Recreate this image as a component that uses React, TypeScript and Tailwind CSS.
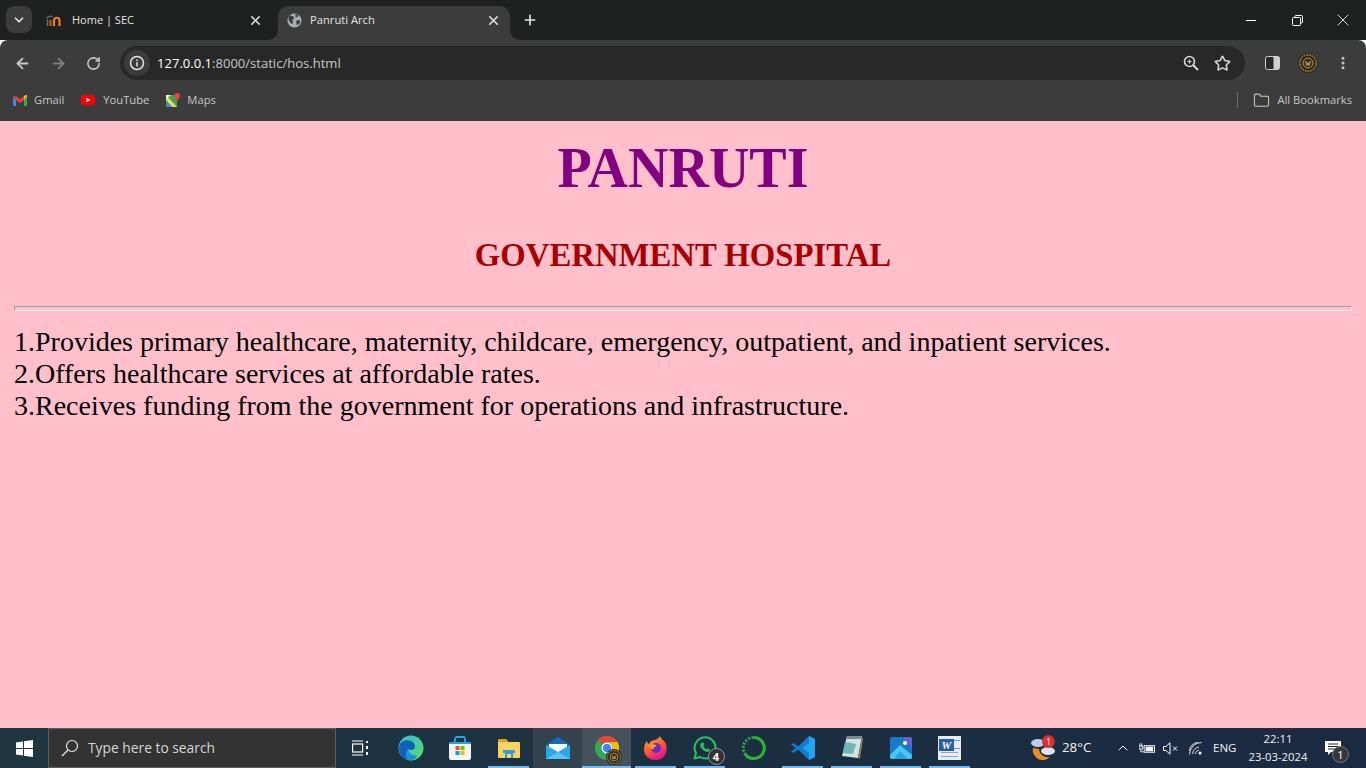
import { ArrowLeft, ArrowRight, ChevronDown, ChevronUp, Folder, MoreVertical, Plus, RotateCw, Star, X } from "lucide-react";

const ui = "font-['Open_Sans','Noto_Sans',sans-serif]";

function Flare({ side }: { side: "left" | "right" }) {
  // little curve where the active tab meets the toolbar
  return (
    <svg width="10" height="10" viewBox="0 0 10 10" className={side === "left" ? "absolute bottom-0 -left-[10px]" : "absolute bottom-0 -right-[10px]"}>
      <path d={side === "left" ? "M10 0V10H0A10 10 0 0 0 10 0Z" : "M0 0V10H10A10 10 0 0 1 0 0Z"} fill="#3c3c3c" />
    </svg>
  );
}

function GlobeIcon() {
  return (
    <svg width="15" height="15" viewBox="0 0 16 16">
      <circle cx="8" cy="8" r="7.5" fill="#a8adb3" />
      <path d="M3 2.500 6.500 3.500 7.500 6 5.500 7.500 6.500 10.500 5 12 2 8 1.500 5ZM9 1 12.500 2.500 11 4.500 9 4ZM10 8 13.500 7.500 14 10 11.500 13 10 12Z" fill="#3c3c3c" />
    </svg>
  );
}

function MoodleIcon() {
  return (
    <svg width="15" height="11" viewBox="0 0 15 11">
      <path d="M0 3 5 1 7 2" stroke="#6f6f6f" strokeWidth="1.200" fill="none" />
      <path d="M1.500 11V4.500" stroke="#6f6f6f" strokeWidth="1.500" fill="none" />
      <path d="M4.500 11V5" stroke="#b9641c" strokeWidth="2" fill="none" />
      <path d="M8 11V5.500A2.500 2.500 0 0 1 13.500 5.500V11" stroke="#ee7f1c" strokeWidth="2.200" fill="none" />
    </svg>
  );
}

function GmailIcon() {
  return (
    <svg width="14" height="11" viewBox="0 0 14 11">
      <path d="M0 2V10a1 1 0 0 0 1 1H3V5Z" fill="#4285f4" />
      <path d="M14 2V10a1 1 0 0 1-1 1H11V5Z" fill="#34a853" />
      <path d="M0 2 3 1 7 4.500 11 1 14 2 11 5 7 8 3 5Z" fill="#ea4335" />
      <path d="M11 1 12.500 0A1 1 0 0 1 14 1V2L11 5Z" fill="#fbbc04" />
    </svg>
  );
}

function YouTubeIcon() {
  return (
    <svg width="14" height="10" viewBox="0 0 14 10">
      <rect width="14" height="10" rx="2.500" fill="#ff0000" />
      <path d="M5.500 3 9.500 5 5.500 7Z" fill="#fff" />
    </svg>
  );
}

function MapsIcon() {
  return (
    <svg width="14" height="15" viewBox="0 0 14 15">
      <path d="M0 2H11V14H0Z" fill="#34a853" />
      <path d="M0 14 5.500 8 11 14Z" fill="#4285f4" />
      <path d="M0 2 11 14H6.500L0 7Z" fill="#f6d55c" />
      <path d="M0 2H5L0 6Z" fill="#f6f1e2" />
      <path d="M11 0a3 3 0 0 1 3 3c0 2-3 4.500-3 5.500C11 7.500 8 5 8 3a3 3 0 0 1 3-3Z" fill="#ea4335" />
    </svg>
  );
}

function ProfileBadge({ size }: { size: number }) {
  return (
    <svg width={size} height={size} viewBox="0 0 20 20">
      <circle cx="10" cy="10" r="10" fill="#2c2416" />
      <circle cx="10" cy="10" r="8.200" fill="none" stroke="#8f7440" strokeWidth="1.800" strokeDasharray="2 .8" />
      <circle cx="10" cy="10" r="5" fill="#3a301c" stroke="#b59a62" strokeWidth="1" />
      <path d="M7.500 8 9 12.500 10 9.500 11 12.500 12.500 8" fill="none" stroke="#c9b27a" strokeWidth=".9" />
    </svg>
  );
}

function TabStrip() {
  return (
    <div className="flex h-10 items-end bg-[#1f2121] text-[#e3e3e3]">
      <div className="mb-[7px] ml-[6px] flex h-[27px] w-[26px] items-center justify-center rounded-lg bg-[#3c3c3c]">
        <ChevronDown size={14} strokeWidth={3} />
      </div>
      <div className="mb-[6px] ml-[12px] flex h-7 w-[234px] items-center pl-[2px] pr-[15px]">
        <MoodleIcon />
        <span className="ml-[11px] flex-1 text-[11px]">Home | SEC</span>
        <X size={15} strokeWidth={2.500} />
      </div>
      <div className="relative flex h-[34px] w-[232px] items-center rounded-t-[10px] bg-[#3c3c3c] pb-[6px] pl-[9px] pr-[9px]">
        <Flare side="left" />
        <GlobeIcon />
        <span className="ml-[8px] flex-1 text-[11.2px]">Panruti Arch</span>
        <X size={15} strokeWidth={2.500} />
        <Flare side="right" />
      </div>
      <div className="mb-[6px] ml-[12px] flex h-7 items-center">
        <Plus size={16} strokeWidth={2.500} />
      </div>
      <div className="mb-[6px] ml-auto flex h-7 items-center text-white">
        <div className="flex w-[46px] justify-center"><div className="h-px w-[10px] bg-white" /></div>
        <div className="flex w-[46px] justify-center">
          <svg width="11" height="11" viewBox="0 0 11 11" fill="none" stroke="#fff">
            <rect x="0.500" y="2.500" width="8" height="8" rx="1" />
            <path d="M3 2.500V1.500A1 1 0 0 1 4 .5H9.500A1 1 0 0 1 10.500 1.500V7A1 1 0 0 1 9.500 8H8.500" />
          </svg>
        </div>
        <div className="flex w-[46px] justify-center"><X size={20} strokeWidth={1} /></div>
      </div>
    </div>
  );
}

function Toolbar() {
  return (
    <div className="flex h-10 items-end rounded-t-lg bg-[#3c3c3c] text-[#c7c7c7]">
      <div className="mb-[8px] flex w-[120px] items-center pl-[14px]">
        <ArrowLeft size={17} strokeWidth={2.500} />
        <ArrowRight size={17} strokeWidth={2.500} className="ml-[19px] text-[#7d7d7d]" />
        <RotateCw size={15} strokeWidth={2.500} className="ml-[20px] -translate-x-px" />
      </div>
      <div className="flex h-[34px] w-[1125px] items-center rounded-l-full rounded-r-full bg-[#282828] pl-[4px] pr-[14px]">
        <div className="flex h-[26px] w-[26px] items-center justify-center rounded-full bg-[#3c3c3c]">
          <svg width="16" height="16" viewBox="0 0 16 16" fill="none" stroke="#e3e3e3" strokeWidth="1.500">
            <circle cx="8" cy="8" r="6.500" />
            <path d="M8 7V11.500M8 4.500V6" />
          </svg>
        </div>
        <span className="ml-[7px] flex-1 pt-px text-[13.05px] text-[#c4c7c5]"><span className="text-white">127.0.0.1</span>:8000/static/hos.html</span>
        <svg width="16" height="16" viewBox="0 0 16 16" fill="none" stroke="#d8d8d8" strokeWidth="1.600">
          <circle cx="6.500" cy="6.500" r="5" />
          <path d="M10 10 15 15" strokeWidth="2" />
          <path d="M4.500 6.500H8.500M6.500 4.500V8.500" strokeWidth="1.200" />
        </svg>
        <Star size={17} strokeWidth={2.250} className="ml-[15px] text-[#d8d8d8]" />
      </div>
      <div className="mb-[7px] ml-[20px] flex items-center">
        <svg width="15" height="14" viewBox="0 0 15 14">
          <rect x="0.500" y="0.500" width="14" height="13" rx="2" fill="#2b2b2b" stroke="#d0d0d0" />
          <path d="M8.500 0.500H12.500A2 2 0 0 1 14.500 2.500V11.500A2 2 0 0 1 12.500 13.500H8.500Z" fill="#d0d0d0" />
        </svg>
        <div className="ml-[18px]"><ProfileBadge size={20} /></div>
        <MoreVertical size={16} strokeWidth={2.500} className="ml-[17px]" />
      </div>
    </div>
  );
}

function BookmarksBar() {
  return (
    <div className="flex h-[41px] items-center bg-[#3c3c3c] pb-px pl-[13px] text-[11.2px] text-[#c7c7c7]">
      <GmailIcon />
      <span className="ml-[7px]">Gmail</span>
      <div className="ml-[17px]"><YouTubeIcon /></div>
      <span className="ml-[8px]">YouTube</span>
      <div className="ml-[17px]"><MapsIcon /></div>
      <span className="ml-[7px]">Maps</span>
      <div className="ml-auto h-[16px] w-px bg-[#6a6a6a]" />
      <Folder size={17} strokeWidth={1.500} className="ml-[15px]" />
      <span className="ml-[7px] mr-[14px]">All Bookmarks</span>
    </div>
  );
}

function WindowsLogo() {
  return (
    <svg width="17" height="17" viewBox="0 0 17 17" fill="#fff">
      <path d="M0 2.400 7 1.400V8H0ZM8 1.300 17 0V8H8ZM0 9H7V15.600L0 14.600ZM8 9H17V17L8 15.700Z" />
    </svg>
  );
}

function Edge() {
  return (
    <svg width="26" height="26" viewBox="0 0 26 26">
      <defs>
        <linearGradient id="edgeA" x1="0" y1="0" x2="1" y2="1">
          <stop offset="0" stopColor="#2fc2d8" />
          <stop offset="1" stopColor="#5fd86a" />
        </linearGradient>
      </defs>
      <circle cx="13" cy="13" r="12.500" fill="url(#edgeA)" />
      <path d="M1 13C1 6 8 4 13 6c4 1.500 5 6 3 8-3 2-6 0-6 0 0 4 4 7 9 7-2 3-5 4-7 4C6 25 1 20 1 13Z" fill="#0c62b8" />
      <path d="M10 14c0 4 4 7 9 7-2 3-5 4-7 4-4 0-6-6-2-11Z" fill="#1e90e0" />
    </svg>
  );
}

function Store() {
  return (
    <svg width="24" height="25" viewBox="0 0 24 25">
      <path d="M7 6V3a2 2 0 0 1 2-2H15a2 2 0 0 1 2 2V6" fill="none" stroke="#22a7e0" strokeWidth="1.800" />
      <path d="M1 6H23V22a2 2 0 0 1-2 2H3a2 2 0 0 1-2-2Z" fill="#f4f4f4" />
      <path d="M1 6H23V8H1Z" fill="#1fa4e4" />
      <rect x="7.500" y="10" width="4" height="4" fill="#f25022" />
      <rect x="12.500" y="10" width="4" height="4" fill="#7fba00" />
      <rect x="7.500" y="15" width="4" height="4" fill="#00a4ef" />
      <rect x="12.500" y="15" width="4" height="4" fill="#ffb900" />
    </svg>
  );
}

function Explorer() {
  return (
    <svg width="22" height="19" viewBox="0 0 22 19">
      <path d="M0 1a1 1 0 0 1 1-1H8L10 2V4H0Z" fill="#d9a32a" />
      <path d="M0 3H21a1 1 0 0 1 1 1V18a1 1 0 0 1-1 1H1a1 1 0 0 1-1-1Z" fill="#fbd35c" />
      <path d="M5 11H17V14H15V19H7V14H5Z" fill="#2f9be0" />
      <rect x="9" y="15" width="4" height="4" fill="#fbd35c" />
    </svg>
  );
}

function Mail() {
  return (
    <svg width="24" height="22" viewBox="0 0 24 22">
      <path d="M0 8 12 0 24 8V22H0Z" fill="#0f6cbd" />
      <path d="M3 7H21V14L12 19 3 14Z" fill="#fff" />
      <path d="M0 8 12 15 24 8V22H0Z" fill="#2aa7e8" />
      <path d="M0 22 12 15 24 22Z" fill="#5cc3f2" />
    </svg>
  );
}

function Chrome() {
  return (
    <div className="relative h-[24px] w-[24px]">
      <svg width="24" height="24" viewBox="0 0 24 24">
        <circle cx="12" cy="12" r="12" fill="#34a853" />
        <path d="M12 0A12 12 0 0 1 22.400 6H12A6 6 0 0 0 6.800 9L3 3.600A12 12 0 0 1 12 0Z" fill="#ea4335" />
        <path d="M22.400 6A12 12 0 0 1 12 24L17.200 15A6 6 0 0 0 12 6Z" fill="#fbbc04" />
        <circle cx="12" cy="12" r="5.500" fill="#fff" />
        <circle cx="12" cy="12" r="4.300" fill="#4285f4" />
      </svg>
      <div className="absolute -bottom-[5px] -right-[3px]"><ProfileBadge size={16} /></div>
    </div>
  );
}

function Firefox() {
  return (
    <svg width="23" height="24" viewBox="0 0 23 24">
      <defs>
        <linearGradient id="foxA" x1="0" y1="0" x2="0.500" y2="1">
          <stop offset="0" stopColor="#ffb52e" />
          <stop offset="0.600" stopColor="#ff5634" />
          <stop offset="1" stopColor="#e31587" />
        </linearGradient>
      </defs>
      <path d="M16 0c1 3 4 4 6 8 2 6 0 16-10.500 16C4 24 0 19 0 13 0 9 2 6 3 5c0 2 1 3 2 3 1-3 4-4 6-4 2-1 4-2 5-4Z" fill="url(#foxA)" />
      <circle cx="12" cy="12" r="5" fill="#6a2cc9" />
      <path d="M4 10c3-2 6-2 8-1 1 1 0 2-2 2 1 3-3 3-6-1Z" fill="#ff9a2e" />
    </svg>
  );
}

function WhatsApp() {
  return (
    <div className="relative h-[24px] w-[24px]">
      <svg width="24" height="24" viewBox="0 0 24 24" fill="none">
        <path d="M1.500 22.500 3 17A10.500 10.500 0 1 1 7 21Z" stroke="#25c35f" strokeWidth="2" strokeLinejoin="round" />
        <path d="M8 7c-1.500 1.500-1 4 1.500 6.500S15 16.500 16.500 15c.8-.8.500-1.500 0-2l-1.500-.8-1.200 1c-1.500-.5-3-2-3.500-3.500l1-1.200L11 7c-.8-.8-2.200-.8-3 0Z" fill="#25c35f" />
      </svg>
      <div className="absolute -bottom-[5px] -right-[8px] flex h-[17px] w-[17px] items-center justify-center rounded-full border border-[#9a9a9a] bg-[#333] text-[11px] font-bold leading-none text-white">4</div>
    </div>
  );
}

function GreenRing() {
  return (
    <svg width="24" height="24" viewBox="0 0 24 24" fill="none">
      <path d="M12 1.500A10.500 10.500 0 1 1 3.500 18.500" stroke="#2fb52f" strokeWidth="3" />
      <path d="M3.500 18.500A10.500 10.500 0 0 1 12 1.500" stroke="#2fa84a" strokeWidth="3" strokeDasharray="2 1.500" />
    </svg>
  );
}

function VsCode() {
  return (
    <svg width="24" height="24" viewBox="0 0 24 24">
      <path d="M18 0 24 3V21L18 24 7 13.500 2.500 17 0 15.500 5 12 0 8.500 2.500 7 7 10.500Z" fill="#0f7ccc" />
      <path d="M18 0 24 3V21L18 24V17L11 12 18 7Z" fill="#23a3ef" />
    </svg>
  );
}

function Notepad() {
  return (
    <svg width="22" height="24" viewBox="0 0 22 24">
      <path d="M6 0H21L17 22 1 20Z" fill="#cfe3e2" />
      <path d="M6 0H21L20 3H5.500Z" fill="#7c8b90" />
      <path d="M4 6 15 8 12 18 2 17Z" fill="#6fb5b0" />
      <path d="M17 22 21 1 22 3 19 23Z" fill="#8f7a55" />
    </svg>
  );
}

function Photos() {
  return (
    <svg width="22" height="22" viewBox="0 0 22 22">
      <rect width="22" height="22" rx="2" fill="#1b78c8" />
      <path d="M14 0H20a2 2 0 0 1 2 2V10L14 5Z" fill="#6a5fd0" />
      <circle cx="15" cy="6" r="2" fill="#fff" />
      <path d="M0 18 10 8 22 18V20a2 2 0 0 1-2 2H2a2 2 0 0 1-2-2Z" fill="#49c6f2" />
      <path d="M4 22 10 14 18 22Z" fill="#2aa3e8" />
    </svg>
  );
}

function Word() {
  return (
    <div className="relative h-[24px] w-[23px] bg-[#e6ebf5] pl-[1px] pt-[3px]">
      <div className="h-[12px] w-[15px] bg-[#2a5caa] text-center font-['Liberation_Serif',serif] text-[11px] font-bold italic leading-[12px] text-white">W</div>
      <div className="absolute right-[1px] top-[4px] h-[9px] w-[6px] border-y border-[#7f97c4]" />
      <div className="absolute bottom-[3px] left-[3px] h-[5px] w-[17px] border-y border-[#8fa6cf]" />
    </div>
  );
}

const apps = [
  { key: "explorer", icon: <Explorer />, open: true },
  { key: "mail", icon: <Mail />, open: false, hover: true },
  { key: "chrome", icon: <Chrome />, open: true, active: true },
  { key: "firefox", icon: <Firefox />, open: true },
  { key: "whatsapp", icon: <WhatsApp />, open: true },
  { key: "ring", icon: <GreenRing />, open: false },
  { key: "vscode", icon: <VsCode />, open: true },
  { key: "notepad", icon: <Notepad />, open: true },
  { key: "photos", icon: <Photos />, open: true },
  { key: "word", icon: <Word />, open: true },
];

function Taskbar() {
  return (
    <div className={`flex h-10 items-stretch bg-gradient-to-r from-[#1f3640] to-[#1a2a42] text-white ${ui}`}>
      <div className="flex w-[48px] items-center justify-center"><WindowsLogo /></div>
      <div className="flex w-[288px] items-center border border-[#5a5f63] bg-[#333333] pl-[12px] text-[13.8px] text-[#d6d6d6]">
        <svg width="18" height="18" viewBox="0 0 18 18" fill="none" stroke="#e8e8e8" strokeWidth="1.200">
          <circle cx="11" cy="7" r="5.500" />
          <path d="M7 11 1 17" />
        </svg>
        <span className="ml-[9px] pt-px">Type here to search</span>
      </div>
      <div className="flex w-[50px] items-center justify-center pr-px">
        <svg width="17" height="16" viewBox="0 0 17 16" fill="none" stroke="#fff" strokeWidth="1.200">
          <path d="M0 1H11M0 15H11" />
          <rect x="0.600" y="4" width="10" height="8" />
          <path d="M15 1V3M15 6V9M15 12V15" strokeWidth="2" />
        </svg>
      </div>
      <div className="flex w-[49px] items-center justify-center"><Edge /></div>
      <div className="flex w-[49px] items-center justify-center"><Store /></div>
      {apps.map((a) => (
        <div key={a.key} className={`relative flex w-[49px] items-center justify-center ${a.active ? "bg-[#44525c]" : a.hover ? "bg-[#33434e]" : ""}`}>
          {a.icon}
          {a.open && <div className={`absolute bottom-0 h-[2px] bg-[#76b9ed] ${a.active ? "inset-x-0" : "inset-x-[4px]"}`} />}
        </div>
      ))}
      <div className="ml-auto flex items-center text-[13.3px]">
        <div className="relative mr-[6px]">
          <svg width="26" height="24" viewBox="0 0 26 24">
            <path d="M3 12a10 10 0 0 0 17 9A9 9 0 0 1 9 13Z" fill="#f08a24" />
            <ellipse cx="8" cy="7" rx="7" ry="4" fill="#b8cfe6" />
            <ellipse cx="18" cy="15" rx="7" ry="4" fill="#d6e4f2" />
          </svg>
          <div className="absolute -top-[1px] right-[1px] flex h-[13px] w-[13px] items-center justify-center rounded-full bg-[#d9302a] text-[9px] leading-none">1</div>
        </div>
        <span className="w-[53px] text-[#f2f2f2]">28°C</span>
        <ChevronUp size={16} strokeWidth={1.500} />
        <div className="ml-[8px] w-[17px]">
          <svg width="16" height="11" viewBox="0 0 17 11" fill="none" stroke="#fff">
            <rect x="5.500" y="2.500" width="11" height="7" />
            <rect x="7.500" y="4" width="7" height="4" fill="#fff" />
            <path d="M0 3H4V6H0ZM1 0V3M3 0V3M2 6V9H5" />
          </svg>
        </div>
        <div className="ml-[7px] w-[16px]">
          <svg width="15" height="13" viewBox="0 0 15 13" fill="none" stroke="#fff">
            <path d="M.5 4.500H3L7 .8V12.200L3 8.500H.5ZM10 4.500 14 8.500M14 4.500 10 8.500" />
          </svg>
        </div>
        <div className="ml-[10px] w-[14px]">
          <svg width="14" height="13" viewBox="0 0 14 13" fill="none" stroke="#d8d8d8">
            <path d="M.5 12.500A12 12 0 0 1 12.500 .5M.5 9A8.500 8.500 0 0 1 9 .5M3.500 12A8 8 0 0 1 10 5M6 12A5 5 0 0 1 10 8" />
            <circle cx="11" cy="11" r="1.500" fill="#fff" stroke="none" />
          </svg>
        </div>
        <span className="ml-[10px] w-[23px] whitespace-nowrap text-[11.5px] text-[#f2f2f2]">ENG</span>
        <div className="ml-[12px] flex w-[60px] flex-col items-center text-[11.3px] leading-[18px] text-[#f2f2f2]">
          <span>22:11</span>
          <span className="whitespace-nowrap">23-03-2024</span>
        </div>
        <div className="relative ml-[17px] mr-[25px]">
          <svg width="16" height="15" viewBox="0 0 16 15">
            <path d="M0 0H16V11H6L3 14V11H0Z" fill="#fff" />
            <path d="M3 3H13M3 5.500H13M3 8H10" stroke="#1a2a42" />
          </svg>
          <div className="absolute -bottom-[7px] -right-[8px] flex h-[17px] w-[17px] items-center justify-center rounded-full border border-[#777] bg-[#33383c] text-[11px] leading-none text-white">1</div>
        </div>
      </div>
    </div>
  );
}

function Page() {
  return (
    <div className="h-[607px] bg-[#ffc0cb] px-[14px] font-['Liberation_Serif',serif] text-black">
      <h1 className="pt-[15px] text-center text-[56px] font-bold leading-[64px] text-[#800080]">PANRUTI</h1>
      <h2 className="mt-[35px] text-center text-[32.76px] font-bold leading-[40px] text-[#a80000]">GOVERNMENT HOSPITAL</h2>
      <hr className="mt-[31px] h-[5px] border border-b-[#eeeeee] border-l-[#9a9a9a] border-r-[#eeeeee] border-t-[#8fa79f]" />
      <div className="mt-[15px] text-[28px] leading-[32px]">
        <p>1.Provides primary healthcare, maternity, childcare, emergency, outpatient, and inpatient services.</p>
        <p>2.Offers healthcare services at affordable rates.</p>
        <p>3.Receives funding from the government for operations and infrastructure.</p>
      </div>
    </div>
  );
}

export default function App() {
  return (
    <div className="h-[768px] w-[1366px] overflow-hidden">
      <div className={ui}>
        <TabStrip />
        <Toolbar />
        <BookmarksBar />
      </div>
      <Page />
      <Taskbar />
    </div>
  );
}
